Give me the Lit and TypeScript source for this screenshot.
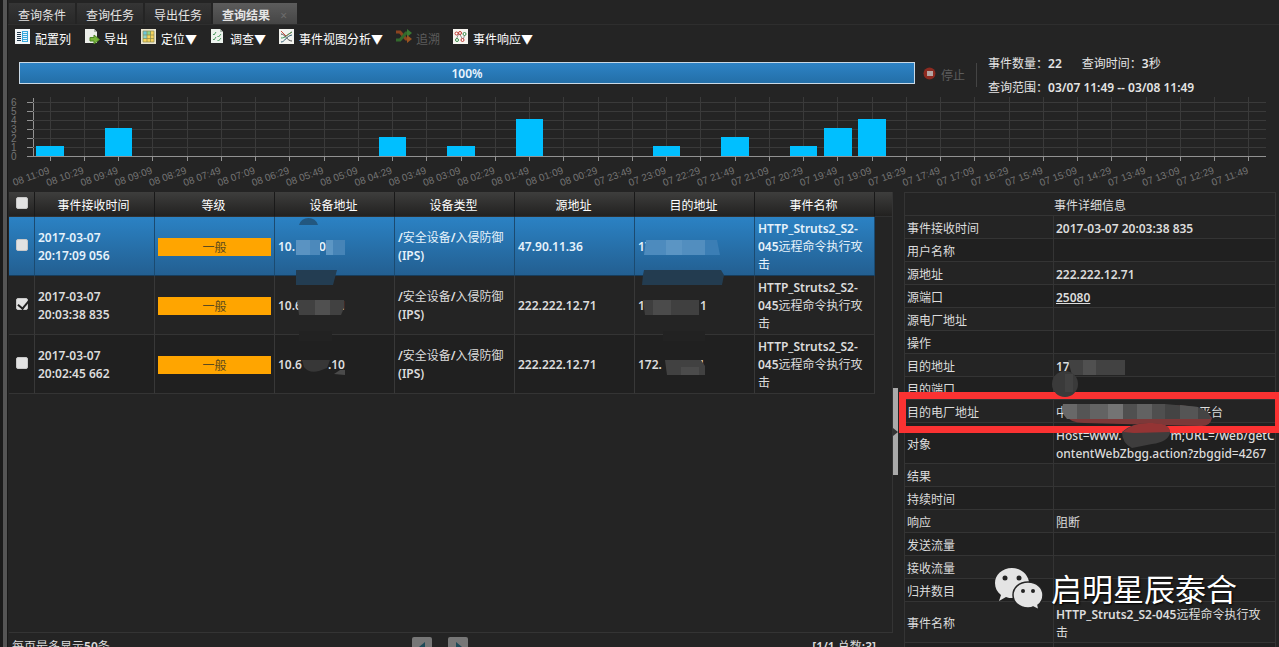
import { LitElement, html, svg, css, nothing } from "lit";
import { customElement, property } from "lit/decorators.js";
import { classMap } from "lit/directives/class-map.js";
import { styleMap } from "lit/directives/style-map.js";

type Piece = string | number;

/** Latin runs are set bold, CJK runs stay regular; numbers become blank spacers. */
const rich = (pieces: Piece[]) =>
  pieces.map((piece) =>
    typeof piece === "number"
      ? html`<span class="spacer" style=${styleMap({ width: `${piece}px` })}></span>`
      : (piece.match(/[\x20-\x7e]+|[^\x20-\x7e]+/g) ?? []).map((run) =>
          /^[\x20-\x7e]/.test(run) ? html`<b>${run}</b>` : run
        )
  );

const shared = css`
  * { box-sizing: border-box; }
  b { font-weight: 600; }
  button { font: inherit; color: inherit; background: none; border: 0; padding: 0; }
  .spacer { display: inline-block; height: 1px; }
  .mask { position: absolute; left: 0; top: 0; width: 1px; height: 1px; overflow: visible; z-index: 2; pointer-events: none; }
`;

/* ---------- toolbar icons ---------- */
const icons = {
  columns: svg`<rect width="15" height="15" fill="#f2f6f8"/><path d="M2 3.500h4M2 5.500h4M2 7.500h4M2 9.500h4M2 11.500h4" stroke="#23384a"/><rect x="7" y="2" width="6" height="11" fill="#39a9dc"/><path d="M8 3.500h4M8 5.500h4M8 7.500h4M8 9.500h4M8 11.500h4" stroke="#e6f6ff"/>`,
  export: svg`<path d="M1 0h9l3 3v11H1z" fill="#eceeea"/><path d="M10 0v3h3z" fill="#aeb4ae"/><path d="M6 8.500h4V6l5.500 4.500-5.500 4.500v-3H6z" fill="#79b63b" stroke="#4c8524"/>`,
  locate: svg`<rect width="15" height="15" fill="#e9e4cf"/><rect x="2" y="2" width="11" height="11" fill="#f6d35c"/><rect x="2" y="2" width="4" height="4" fill="#6cc6da"/><rect x="6" y="2" width="4" height="4" fill="#8fd28a"/><rect x="2" y="6" width="4" height="4" fill="#8ed4c8"/><path d="M2 2h11v11H2zM6 2v11M9.500 2v11M2 6h11M2 9.500h11" fill="none" stroke="#8c8a4a" stroke-width=".7"/>`,
  survey: svg`<path d="M1 0h9l3 3v11H1z" fill="#edf3ee"/><path d="M10 0v3h3z" fill="#a9b9ad"/><path d="M3 5l1 1 2-3M7.500 7l1 1 2.500-3M3 10l1 1 2-3M7.500 11l1 1 2.500-3" fill="none" stroke="#4d9b61"/>`,
  analysis: svg`<rect width="15" height="15" fill="#f3f3ef"/><path d="M2 2l5 5 6-4" fill="none" stroke="#c64a3a"/><path d="M2 13c4 0 5-6 11-7" fill="none" stroke="#2b5a70"/><path d="M2 9c5 0 5-3 11-6" fill="none" stroke="#3f9a5b"/><path d="M2 5c4 0 6 7 11 7" fill="none" stroke="#4a4a4a"/>`,
  trace: svg`<path d="M0 3h4l6 7h2" fill="none" stroke="#8c4420" stroke-width="3"/><path d="M0 11h4l6-7h2" fill="none" stroke="#33692c" stroke-width="3"/><path d="M11 0l5 4-5 4z" fill="#3b7a33"/><path d="M11 6l5 4-5 4z" fill="#9a5420"/>`,
  respond: svg`<rect width="15" height="15" fill="#f7f5f0"/><path d="M3 11L6 4l4 7 2-6M3 4l3 1" fill="none" stroke="#777" stroke-width=".8"/><g fill="#fff"><circle cx="3.500" cy="4.500" r="1.500" stroke="#c03a33"/><circle cx="7" cy="4" r="1.500" stroke="#c03a33"/><circle cx="4" cy="11" r="1.500" stroke="#3b8b49"/><circle cx="9.500" cy="11" r="1.500" stroke="#c03a33"/><circle cx="11.500" cy="5" r="1.500" stroke="#3b8b49"/></g>`,
};

/* ---------- histogram ---------- */
@customElement("event-histogram")
class EventHistogram extends LitElement {
  @property({ attribute: false }) values: Record<number, number> = {};
  @property({ type: Number }) slots = 36;

  static styles = css`
    :host { display: grid; grid-template-columns: 25px minmax(0, 1fr); height: 93px; padding-right: 13px; }
    .scale, .plot { display: block; width: 100%; height: 93px; overflow: visible; }
    text { font: 10px "Liberation Sans", Arial, sans-serif; fill: #747474; }
    .grid { stroke: #3a3a3a; shape-rendering: crispEdges; }
    .axis { stroke: #929292; shape-rendering: crispEdges; }
    .bar { fill: #00bfff; shape-rendering: crispEdges; }
  `;

  private label(i: number) {
    const minutes = 8 * 1440 + 11 * 60 + 9 - i * 40;
    const two = (n: number) => String(n).padStart(2, "0");
    return `${two(Math.floor(minutes / 1440))} ${two(Math.floor(minutes / 60) % 24)}:${two(minutes % 60)}`;
  }

  render() {
    const base = 57;
    const unit = 9;
    const ticks = [0, 1, 2, 3, 4, 5, 6];
    const all = Array.from({ length: this.slots }, (_, i) => i);
    const at = (i: number) => `${((i + 0.5) * 100) / this.slots}%`;
    return html`
      <svg class="scale" aria-hidden="true">
        ${ticks.map((t) => svg`<text x="3" y=${base - t * unit + 4}>${t}</text>
          <line class="axis" x1="19" x2="25" y1=${base - t * unit} y2=${base - t * unit}></line>`)}
        <line class="axis" x1="25" x2="25" y1="-1" y2=${base}></line>
      </svg>
      <svg class="plot" role="img" aria-label="事件数量分布">
        ${ticks.slice(1).map((t) => svg`<line class="grid" x1="0" x2="100%" y1=${base - t * unit} y2=${base - t * unit}></line>`)}
        ${all.map((i) => svg`<line class="grid" x1=${at(i)} x2=${at(i)} y1="-2" y2=${base}></line>
          <line class="axis" x1=${at(i)} x2=${at(i)} y1=${base} y2=${base + 5}></line>`)}
        ${Object.entries(this.values).map(([i, v]) => svg`<rect class="bar" x=${`${((Number(i) + 0.1) * 100) / this.slots}%`}
          width=${`${80 / this.slots}%`} y=${base - v * unit - 1} height=${v * unit + 1}></rect>`)}
        <line class="axis" x1="0" x2="100%" y1=${base} y2=${base}></line>
        ${all.map((i) => svg`<svg x=${at(i)} y="74" overflow="visible"><text text-anchor="end" transform="rotate(-20)">${this.label(i)}</text></svg>`)}
      </svg>`;
  }
}

/* ---------- event list ---------- */
interface EventRow {
  time: string[];
  source: string;
  device: Piece[];
  target: Piece[];
  selected?: boolean;
  checked?: boolean;
  deviceMask: unknown;
  targetMask: unknown;
}

const rows: EventRow[] = [
  {
    time: ["2017-03-07", "20:17:09 056"],
    source: "47.90.11.36",
    device: ["10.", 24, "0"],
    target: ["17"],
    selected: true,
    deviceMask: svg`<path d="M24 8a10 10 0 0 1 19 0z" fill="#225780"/><path d="M21 23h14v15H21z" fill="#5a93c2"/><path d="M35 23h10v15H35z" fill="#4c89bb"/><path d="M51 23h7v15h-7z" fill="#5c96c4"/><path d="M58 23h12v15H58z" fill="#4684b7"/><path d="M21 53h41l-4 15H21z" fill="#233d52"/>`,
    targetMask: svg`<path d="M11 23h20v15H9z" fill="#4d8bbe"/><path d="M31 23h16v15H31z" fill="#5b95c4"/><path d="M47 23h23v15H47z" fill="#528ebf"/><path d="M70 23h12l3 15H70z" fill="#3b7eb5"/><path d="M9 53h77l3 5-2 10H7l1-10z" fill="#233c50"/>`,
  },
  {
    time: ["2017-03-07", "20:03:38 835"],
    source: "222.222.12.71",
    device: ["10.6", 37, "1"],
    target: ["1", 55, "1"],
    checked: true,
    deviceMask: svg`<path d="M22 24h18v15H24z" fill="#414141"/><path d="M40 24h15v15H40z" fill="#505050"/><path d="M55 24h14v8l-3 7H55z" fill="#414141"/><path d="M24 55h33v10H24z" fill="#222"/>`,
    targetMask: svg`<path d="M8 24h10v15h-8z" fill="#3e3e3e"/><path d="M18 24h18v15H18z" fill="#4b4b4b"/><path d="M36 24h28v15H36z" fill="#404040"/><path d="M28 55h42v10H28z" fill="#222"/>`,
  },
  {
    time: ["2017-03-07", "20:02:45 662"],
    source: "222.222.12.71",
    device: ["10.6", 26, ".10"],
    target: ["172.", 36, "1"],
    deviceMask: svg`<path d="M27 25h28l-3 8-8 3c-7 2-12 0-15-4z" fill="#373737"/><path d="M59 39l6-4h5v5z" fill="#4a4a4a"/>`,
    targetMask: svg`<path d="M30 25h36l4 6v9H32z" fill="#414141"/><path d="M46 32h18v8H46z" fill="#4b4b4b"/>`,
  },
];

@customElement("event-table")
class EventTable extends LitElement {
  static styles = [shared, css`
    :host { display: block; }
    table { width: 100%; table-layout: fixed; border-collapse: separate; border-spacing: 0; line-height: 18px; }
    .pick { width: 26px; }
    .data { width: 120px; }
    th { height: 25px; padding: 3px 2px 0 0; font-weight: 400; color: #fff; text-align: center;
      background: linear-gradient(#3e3e3d, #222120); border-right: 1px solid #191919; border-bottom: 1px solid #303030; }
    th:last-child { border-right: 0; }
    td { position: relative; height: 59px; padding: 3px 3px 1px; vertical-align: middle; overflow-wrap: anywhere;
      border-right: 1px solid #383838; border-bottom: 1px solid #343434; }
    .rest { border: 0; }
    .alt td { background: #202020; }
    .alt .rest { background: none; }
    .selected td:not(.rest) { background: linear-gradient(#2b82c4, #235f91); border-right-color: #1b4a70; border-bottom-color: #173d5c; color: #e6f2fb; }
    .check, td.check { text-align: center; padding: 0; }
    input { appearance: none; display: block; width: 12px; height: 12px; margin: 0 0 2px 7px; border-radius: 2px; background: #e2e2e2; border: 1px solid #c8c8c8; }
    input:checked::after { content: ""; display: block; width: 5px; height: 9px; margin: -1px 0 0 3px; border: solid #222; border-width: 0 2px 2px 0; transform: rotate(40deg); }
    .level { display: block; height: 18px; line-height: 20px; background: #ffa500; color: #5b4a1e; text-align: center; }
  `];

  render() {
    const heads = ["事件接收时间", "等级", "设备地址", "设备类型", "源地址", "目的地址", "事件名称"];
    return html`<table>
      <colgroup><col class="pick" />${heads.map(() => html`<col class="data" />`)}<col /></colgroup>
      <thead><tr>
        <th class="check"><input type="checkbox" aria-label="全选" /></th>
        ${heads.map((h) => html`<th scope="col">${h}</th>`)}<th></th>
      </tr></thead>
      <tbody>${rows.map((r, i) => html`<tr class=${classMap({ selected: !!r.selected, alt: i === 2 })}>
        <td class="check"><input type="checkbox" aria-label=${r.time.join(" ")} .checked=${!!r.checked} /></td>
        <td><b>${r.time[0]}<br />${r.time[1]}</b></td>
        <td><span class="level">一般</span></td>
        <td>${rich(r.device)}<svg class="mask">${r.deviceMask}</svg></td>
        <td>${rich(["/安全设备/入侵防御"])}<br /><b>(IPS)</b></td>
        <td><b>${r.source}</b></td>
        <td>${rich(r.target)}<svg class="mask">${r.targetMask}</svg></td>
        <td>${rich(["HTTP_Struts2_S2-"])}<br />${rich(["045远程命令执行攻击"])}</td>
        <td class="rest"></td>
      </tr>`)}</tbody>
    </table>`;
  }
}

/* ---------- event details ---------- */
interface Detail {
  name: string;
  lines?: Piece[][];
  link?: string;
  long?: boolean;
  mask?: unknown;
}

const details: Detail[] = [
  { name: "事件接收时间", lines: [["2017-03-07 20:03:38 835"]] },
  { name: "用户名称" },
  { name: "源地址", lines: [["222.222.12.71"]] },
  { name: "源端口", link: "25080" },
  { name: "源电厂地址" },
  { name: "操作" },
  { name: "目的地址", lines: [["17"]], mask: svg`<path d="M14 6h57v15H18z" fill="#424242"/><path d="M29 6h13v15H29z" fill="#505050"/>` },
  { name: "目的端口", mask: svg`<circle cx="11" cy="7" r="13" fill="#3a3a3a"/><path d="M11-3h8v18h-8z" fill="#424242"/>` },
  {
    name: "目的电厂地址",
    lines: [["中", 131, "平台"]],
    mask: svg`<path d="M10 4h84l40 2q18 3 24 12-2 9-12 8L30 23q-14 0-20-9-3-6 0-10z" fill="#7d3838"/><path d="M9 4h14v15H13q-7-7-4-15z" fill="#686868"/><path d="M23 4h13v15H23z" fill="#555"/><path d="M36 4h18v15H36z" fill="#636363"/><path d="M54 4h15v15H54z" fill="#747474"/><path d="M69 4h14v15H69z" fill="#505050"/><path d="M83 4h15v15H83z" fill="#626262"/><path d="M98 4h13v15H98z" fill="#4f4f4f"/><path d="M111 4l33 3 10 5 3 7h-46z" fill="#444"/><path d="M126 5l18 2v12h-18z" fill="#555"/>`,
  },
  {
    name: "对象",
    long: true,
    lines: [["Host=www.", 49, "m;URL=/web/getC"], ["ontentWebZbgg.action?zbggid=4267"]],
    mask: svg`<path d="M68 9Q78-1 98 0q18 0 18 10-2 9-18 11l-20 4q-10-5-10-16z" fill="#3e3d3d"/><path d="M69 9Q79-1 98 0q18 0 18 9L80 10z" fill="#943434"/>`,
  },
  { name: "结果" },
  { name: "持续时间" },
  { name: "响应", lines: [["阻断"]] },
  { name: "发送流量" },
  { name: "接收流量" },
  { name: "归并数目" },
  { name: "事件名称", lines: [["HTTP_Struts2_S2-045远程命令执行攻"], ["击"]] },
  { name: "事件类型" },
];

@customElement("event-details")
class EventDetails extends LitElement {
  static styles = [shared, css`
    :host { display: block; }
    table { width: 100%; table-layout: fixed; border-collapse: separate; border-spacing: 0; line-height: 18px;
      border: 1px solid #343434; border-bottom: 0; }
    .name { width: 149px; }
    th, td { position: relative; height: 23px; padding: 4px 2px 0; font-weight: 400; text-align: left; white-space: nowrap; border-bottom: 1px solid #343434; }
    tbody th { border-right: 1px solid #343434; }
    thead th { text-align: center; padding-top: 3px; }
    tr:nth-child(even) { background: #202020; }
    a { color: inherit; font-weight: 600; }
    .long b { font-weight: 500; }
  `];

  render() {
    return html`<table>
      <colgroup><col class="name" /><col /></colgroup>
      <thead><tr><th colspan="2" scope="colgroup">事件详细信息</th></tr></thead>
      <tbody>${details.map((d) => html`<tr class=${classMap({ long: !!d.long })}>
        <th scope="row">${d.name}</th>
        <td>${d.link ? html`<a href="#port">${d.link}</a>` : nothing}${(d.lines ?? []).map((line, i) => html`${i ? html`<br />` : nothing}${rich(line)}`)}${d.mask ? html`<svg class="mask">${d.mask}</svg>` : nothing}</td>
      </tr>`)}</tbody>
    </table>`;
  }
}

/* ---------- page ---------- */
@customElement("app-root")
class AppRoot extends LitElement {
  static styles = [shared, css`
    :host { display: flex; height: 100vh; overflow: hidden; background: #242424; color: #dcdcdc;
      font: 12px/18px "Noto Sans", "Noto Sans CJK SC", sans-serif; }
    .edge { flex: 0 0 8px; background: linear-gradient(90deg, #1b1b1b 3px, #555 3px 7px, #181818 7px); }
    .page { flex: 1; min-width: 0; display: flex; flex-direction: column; padding-top: 3px; }
    .tabs { display: flex; gap: 2px; padding-left: 1px; border-bottom: 1px solid #2e2e2e; }
    .tab { height: 21px; padding: 4px 9px 0; line-height: 17px; color: #e4e4e4; background: linear-gradient(#353535, #282828); white-space: nowrap; }
    .tab.on { display: flex; gap: 9px; font-weight: 700; background: linear-gradient(#5c5c5c, #454545); }
    .close { color: #6c6c6c; font-weight: 400; width: 9px; }
    .tools { display: flex; gap: 13px; height: 26px; padding: 4px 7px 0; }
    .tool { display: flex; gap: 5px; color: #fff; white-space: nowrap; align-items: flex-start; height: 20px; }
    .tool svg { width: 15px; height: 15px; overflow: visible; }
    .tool span { padding-top: 2px; }
    .tool:disabled { color: #5c5c5c; }
    .status { display: flex; height: 48px; padding-left: 11px; }
    .progress { flex: 1; height: 22px; margin-top: 11px; text-align: center; line-height: 21px; font-weight: 600; color: #eaf5ff;
      border: 1px solid #c9d9e6; background: linear-gradient(#2d83c6, #236fa8); }
    .stop { display: flex; gap: 5px; width: 62px; height: 24px; margin-top: 12px; padding-left: 8px; color: #5c5c5c; align-items: center; border-right: 1px solid #444; }
    .stop svg { width: 13px; height: 13px; margin-bottom: 4px; }
    .stop span { padding-top: 2px; }
    .info { flex: 0 0 302px; padding: 1px 0 0 11px; line-height: 24px; color: #e4e4e4; }
    .info div { display: flex; gap: 20px; }
    .main { flex: 1; min-height: 0; display: flex; }
    .list { flex: 1; min-width: 0; display: flex; flex-direction: column; padding-left: 1px; }
    .grid { flex: 1; min-height: 0; overflow: hidden; border-right: 1px solid #343434; border-bottom: 1px solid #343434; }
    .pager { flex: 0 0 14px; overflow: hidden; display: grid; grid-template-columns: 1fr auto 1fr; padding: 4px 17px 0 3px; }
    .pager span { padding-top: 1px; }
    .pager .total { text-align: right; }
    .turns { display: flex; gap: 16px; margin-right: 8px; }
    .turns button { width: 20px; height: 20px; background: #777; border-radius: 2px; }
    .turns svg { width: 20px; height: 20px; display: block; }
    .splitter { flex: 0 0 6px; display: flex; align-items: center; }
    .handle { width: 5px; height: 87px; margin-top: 24px; background: #a9a9a9; display: flex; align-items: center; }
    .handle svg { width: 5px; height: 8px; }
    .side { flex: 0 0 380px; position: relative; padding: 0 3px 0 5px; overflow: hidden; }
    .frame { position: absolute; left: 0; right: 0; top: 200px; height: 41px; border: 7px solid #fb3232; border-right-width: 4px; z-index: 1; }
    .brand { position: absolute; right: 42px; top: 373px; display: flex; gap: 7px; align-items: center; z-index: 3;
      color: #fff; font-size: 31px; line-height: 48px; text-shadow: 1px 1px 2px #000; white-space: nowrap; }
    .brand svg { width: 50px; height: 44px; }
  `];

  private tool(icon: unknown, label: string, disabled = false) {
    return html`<button class="tool" ?disabled=${disabled}><svg viewBox="0 0 15 15" aria-hidden="true">${icon}</svg><span>${label}</span></button>`;
  }

  render() {
    return html`
      <div class="edge"></div>
      <div class="page">
        <nav class="tabs">
          <button class="tab">查询条件</button>
          <button class="tab">查询任务</button>
          <button class="tab">导出任务</button>
          <button class="tab on">查询结果<span class="close">×</span></button>
        </nav>
        <div class="tools">
          ${this.tool(icons.columns, "配置列")}
          ${this.tool(icons.export, "导出")}
          ${this.tool(icons.locate, "定位▼")}
          ${this.tool(icons.survey, "调查▼")}
          ${this.tool(icons.analysis, "事件视图分析▼")}
          ${this.tool(icons.trace, "追溯", true)}
          ${this.tool(icons.respond, "事件响应▼")}
        </div>
        <div class="status">
          <div class="progress" role="progressbar" aria-valuenow="100">100%</div>
          <button class="stop" disabled>
            <svg viewBox="0 0 13 13" aria-hidden="true"><circle cx="6.500" cy="6.500" r="6" fill="#8c2a20"/><path d="M4 4h6v5H4z" fill="#b5a5a3"/></svg><span>停止</span>
          </button>
          <div class="info">
            <div><span>事件数量：<b>22</b></span><span>查询时间：<b>3</b>秒</span></div>
            <div><span>查询范围：<b>03/07 11:49 -- 03/08 11:49</b></span></div>
          </div>
        </div>
        <event-histogram .values=${{ 0: 1, 2: 3, 10: 2, 12: 1, 14: 4, 18: 1, 20: 2, 22: 1, 23: 3, 24: 4 }}></event-histogram>
        <div class="main">
          <section class="list">
            <div class="grid"><event-table></event-table></div>
            <div class="pager">
              <span>${rich(["每页最多显示50条"])}</span>
              <div class="turns">
                <button aria-label="上一页"><svg viewBox="0 0 20 20"><path d="M13 5v11L7 10z" fill="#1e4a58"/></svg></button>
                <button aria-label="下一页"><svg viewBox="0 0 20 20"><path d="M8 5v11l6-6z" fill="#1e4a58"/></svg></button>
              </div>
              <span class="total">${rich(["[1/1 总数:3]"])}</span>
            </div>
          </section>
          <div class="splitter"><div class="handle"><svg viewBox="0 0 5 8"><path d="M0 0l5 4-5 4z" fill="#333"/></svg></div></div>
          <aside class="side">
            <event-details></event-details>
            <div class="frame"></div>
            <div class="brand">
              <svg viewBox="0 0 50 44" aria-hidden="true">
                <path d="M18 1C8 1 1 8 1 16c0 5 2 9 6 12l-2 6 7-4c2 1 4 1 7 1 9 0 16-7 16-15S27 1 18 1z" fill="#e4e4e4"/>
                <path d="M34 15c-9 0-15 6-15 13s6 13 15 13c2 0 4 0 5-1l6 3-1-5c3-2 5-6 5-10 0-7-6-13-15-13z" fill="#e4e4e4" stroke="#242424" stroke-width="1.500"/>
                <g fill="#242424"><circle cx="11" cy="11" r="2.500"/><circle cx="25" cy="11" r="2.500"/><circle cx="29" cy="24" r="2"/><circle cx="39" cy="24" r="2"/></g>
              </svg>
              <span>启明星辰泰合</span>
            </div>
          </aside>
        </div>
      </div>`;
  }
}
